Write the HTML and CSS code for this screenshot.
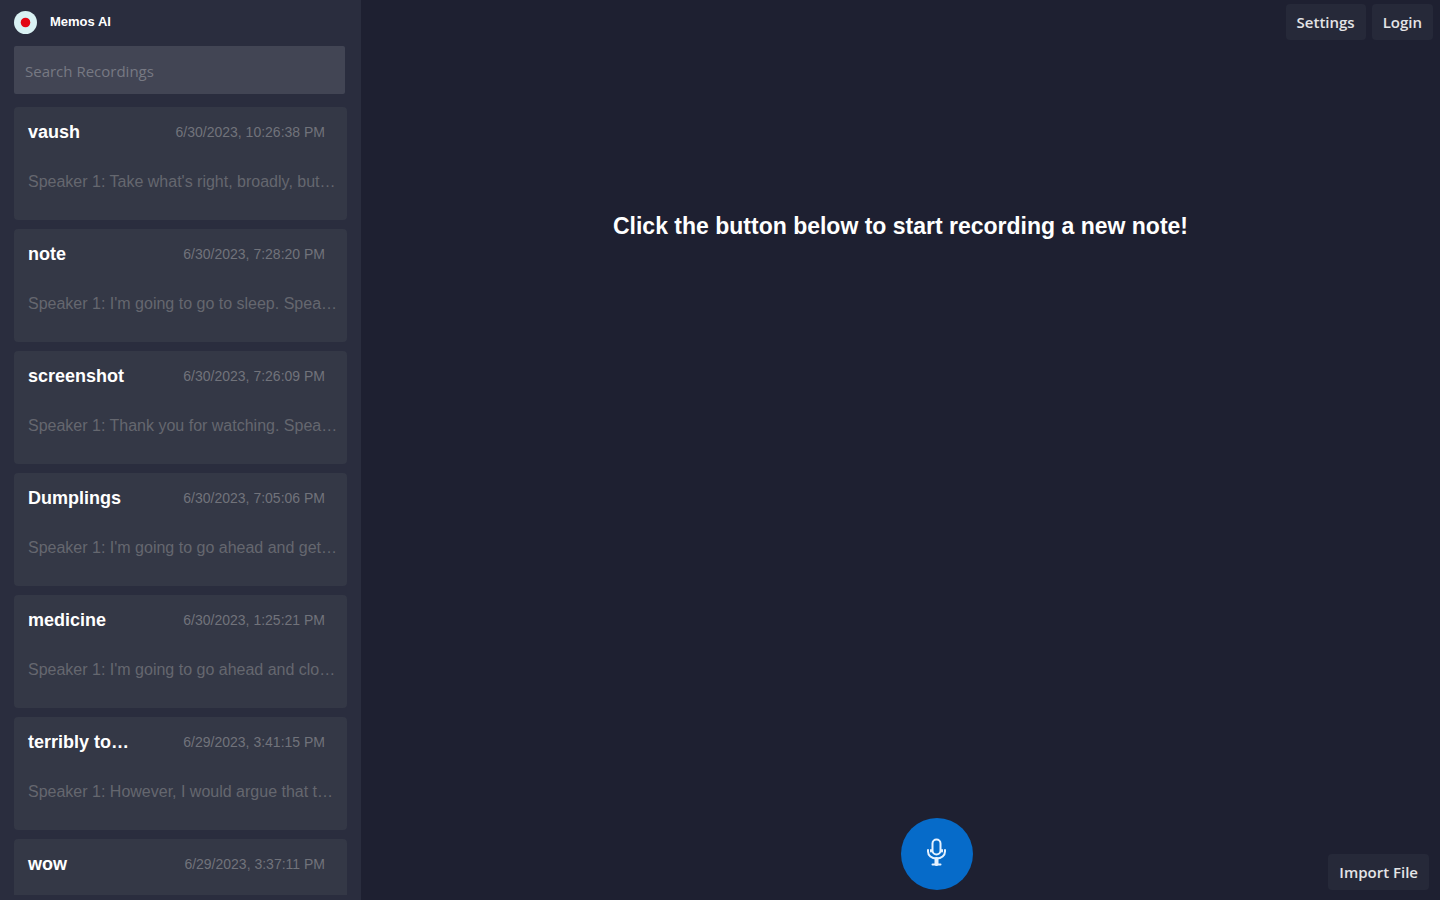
FILE: index.html
```html
<!DOCTYPE html>
<html lang="en">
<head>
  <meta charset="UTF-8" />
  <meta name="viewport" content="width=device-width, initial-scale=1.0" />
  <title>Memos AI</title>
  <link rel="stylesheet" href="styles.css">
</head>
<body>
  <aside class="sidebar">
    <div class="brand">
      <svg class="logo" viewBox="0 0 24 24" aria-hidden="true">
        <circle cx="12" cy="12" r="12" fill="#d9f1f3"/>
        <circle cx="12" cy="12" r="5" fill="#e30613"/>
      </svg>
      <h1>Memos AI</h1>
    </div>
    <input class="search" type="search" placeholder="Search Recordings" aria-label="Search Recordings">
    <div class="recordings">
      <article class="recording">
        <div class="recording-head">
          <h2>vaush</h2>
          <time>6/30/2023, 10:26:38 PM</time>
        </div>
        <p>Speaker 1: Take what's right, broadly, but…</p>
      </article>
      <article class="recording">
        <div class="recording-head">
          <h2>note</h2>
          <time>6/30/2023, 7:28:20 PM</time>
        </div>
        <p>Speaker 1: I'm going to go to sleep. Spea…</p>
      </article>
      <article class="recording">
        <div class="recording-head">
          <h2>screenshot</h2>
          <time>6/30/2023, 7:26:09 PM</time>
        </div>
        <p>Speaker 1: Thank you for watching. Spea…</p>
      </article>
      <article class="recording">
        <div class="recording-head">
          <h2>Dumplings</h2>
          <time>6/30/2023, 7:05:06 PM</time>
        </div>
        <p>Speaker 1: I'm going to go ahead and get…</p>
      </article>
      <article class="recording">
        <div class="recording-head">
          <h2>medicine</h2>
          <time>6/30/2023, 1:25:21 PM</time>
        </div>
        <p>Speaker 1: I'm going to go ahead and clo…</p>
      </article>
      <article class="recording">
        <div class="recording-head">
          <h2>terribly to…</h2>
          <time>6/29/2023, 3:41:15 PM</time>
        </div>
        <p>Speaker 1: However, I would argue that t…</p>
      </article>
      <article class="recording">
        <div class="recording-head">
          <h2>wow</h2>
          <time>6/29/2023, 3:37:11 PM</time>
        </div>
      </article>
    </div>
  </aside>
  <main class="content">
    <nav class="topbar">
      <button class="btn" type="button">Settings</button>
      <button class="btn" type="button">Login</button>
    </nav>
    <h2 class="prompt">Click the button below to start recording a new note!</h2>
    <button class="record" type="button" aria-label="Start recording">
      <svg viewBox="0 0 24 30" fill="none" stroke="#e6f2ff" stroke-width="2" stroke-linecap="round" aria-hidden="true">
        <rect x="7.5" y="2.5" width="8" height="15" rx="4"/>
        <path d="M3 13v1.5c0 4 3.5 7 8.5 7s8.5-3 8.5-7V13M7.5 27.5h8"/>
        <path d="M6 13v1.5M17 13v1.5"/>
        <path d="M11.5 22v5" stroke-width="4"/>
      </svg>
    </button>
    <button class="btn import" type="button">Import File</button>
  </main>
</body>
</html>
```

FILE: styles.css
```css
* {
  box-sizing: border-box;
}
body {
  margin: 0;
  height: 100vh;
  display: flex;
  overflow: hidden;
  background: #1e2031;
  color: #fff;
  font-family: "Liberation Sans", Arial, sans-serif;
}
h1, h2, p {
  margin: 0;
}
button, input {
  border: none;
  font-family: "Open Sans", "Segoe UI", sans-serif;
}
button {
  cursor: pointer;
}

/* Sidebar */
.sidebar {
  flex: 0 0 25%;
  min-width: 361px;
  display: flex;
  flex-direction: column;
  padding: 10px 14px 5px;
  background: #2a2d3e;
}
.brand {
  display: flex;
  align-items: center;
  gap: 13px;
  height: 24px;
  margin-bottom: 12px;
}
.logo {
  width: 23px;
  height: 23px;
}
.brand h1 {
  font-size: 13px;
  line-height: 16px;
}
.search {
  flex: none;
  width: auto;
  height: 48px;
  margin: 0 2px 13px 0;
  padding: 2px 11px 0;
  border-radius: 2px;
  background: #424554;
  color: #fff;
  font-size: 15px;
}
.search::placeholder {
  color: #777983;
  opacity: 1;
}
.recordings {
  flex: 1;
  min-height: 0;
  display: flex;
  flex-direction: column;
  gap: 9px;
  overflow: hidden;
}
.recording {
  flex: none;
  height: 113px;
  padding: 13px 14px 0;
  border-radius: 4px;
  background: #343846;
}
.recording-head {
  display: flex;
  justify-content: space-between;
  align-items: center;
  padding-right: 8px;
  margin-bottom: 28px;
}
.recording h2 {
  font-size: 18px;
  line-height: 24px;
}
.recording time {
  color: #71737b;
  font-size: 14px;
}
.recording p {
  color: #65676f;
  font-size: 16px;
  line-height: 20px;
  white-space: nowrap;
}

/* Main area */
.content {
  position: relative;
  flex: 1;
}
.topbar {
  display: flex;
  justify-content: flex-end;
  gap: 6px;
  padding: 4px 7px;
}
.btn {
  height: 36px;
  padding: 0 11px;
  border-radius: 4px;
  background: #262939;
  color: #e4e4e6;
  font-size: 15px;
  font-weight: 600;
}
.prompt {
  margin-top: 168px;
  font-size: 23px;
  line-height: 28px;
  text-align: center;
}
.record {
  position: absolute;
  left: 50%;
  bottom: 10px;
  display: flex;
  align-items: center;
  justify-content: center;
  width: 72px;
  height: 72px;
  padding: 0 0 4px;
  border-radius: 50%;
  background: #066bc9;
}
.record svg {
  width: 24px;
  height: 30px;
}
.import {
  position: absolute;
  right: 11px;
  bottom: 10px;
}
```
